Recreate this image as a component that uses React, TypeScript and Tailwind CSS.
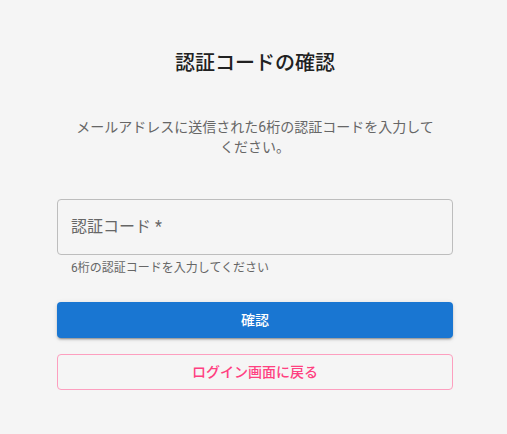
export default function App() {
  return (
    <div
      className="min-h-[434px] bg-[#f5f5f5] pt-[50px]"
      style={{ fontFamily: '"Roboto", "Noto Sans CJK JP", sans-serif' }}
    >
      <div className="ml-[57px] w-[396px] flex flex-col">
        <h1 className="text-center text-[20px] leading-[26px] font-medium text-[#212121]">認証コードの確認</h1>
        <p className="mt-[41px] px-4 text-center text-[14px] leading-[20px] text-[#666666]">
          メールアドレスに送信された6桁の認証コードを入力してください。
        </p>
        <div className="mt-[42px]">
          <div className="h-[56px] rounded border border-[#bdbdbd] px-[13px] flex items-center">
            <span className="text-[16px] text-[#666666]">認証コード *</span>
          </div>
          <p className="mt-[3px] ml-[14px] text-[12px] leading-[20px] text-[#666666]">6桁の認証コードを入力してください</p>
        </div>
        <button className="mt-[24px] h-[36px] rounded bg-[#1976d2] text-white text-[14px] font-medium shadow-[0_3px_1px_-2px_rgba(0,0,0,0.2),0_2px_2px_0_rgba(0,0,0,0.14),0_1px_5px_0_rgba(0,0,0,0.12)]">
          確認
        </button>
        <button className="mt-[16px] h-[36px] rounded border border-[#fd9fbf] text-[#ff4081] text-[14px] font-medium">
          ログイン画面に戻る
        </button>
      </div>
    </div>
  );
}
